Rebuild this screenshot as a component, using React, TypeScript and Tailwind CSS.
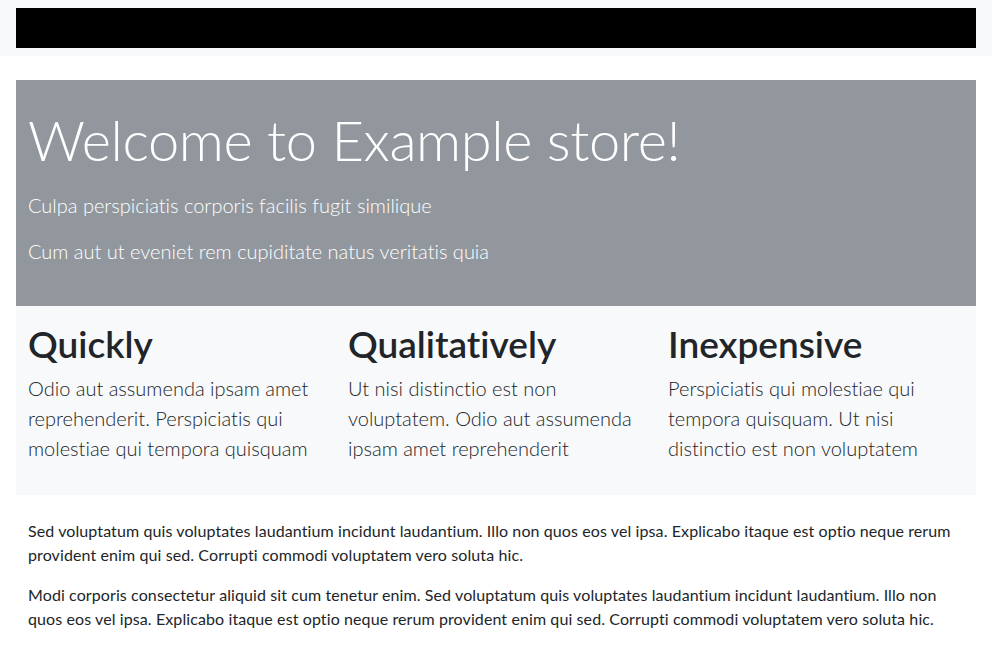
import React from "react";

const features = [
  {
    title: "Quickly",
    text: "Odio aut assumenda ipsam amet reprehenderit. Perspiciatis qui molestiae qui tempora quisquam",
  },
  {
    title: "Qualitatively",
    text: "Ut nisi distinctio est non voluptatem. Odio aut assumenda ipsam amet reprehenderit",
  },
  {
    title: "Inexpensive",
    text: "Perspiciatis qui molestiae qui tempora quisquam. Ut nisi distinctio est non voluptatem",
  },
];

export default function App() {
  return (
    <div className="min-h-screen bg-white font-['Lato',sans-serif] text-[#212529] [font-variant-ligatures:none]">
      {/* Navbar */}
      <nav className="bg-[#f8f9fa] px-4 py-2">
        <div className="h-10 w-full bg-black"></div>
      </nav>

      <main className="mt-6 px-4">
        {/* Jumbotron */}
        <div className="bg-[#91979d] px-3 pt-[26px] pb-6 text-white">
          <h1 className="mb-[17px] text-[56px] font-light leading-[1.2] tracking-[-0.4px]">
            Welcome to Example store!
          </h1>
          <p className="mb-4 text-[20px] font-light leading-[30px]">
            Culpa perspiciatis corporis facilis fugit similique
          </p>
          <p className="mb-4 text-[20px] font-light leading-[30px]">
            Cum aut ut eveniet rem cupiditate natus veritatis quia
          </p>
        </div>

        {/* Features */}
        <div className="grid grid-cols-3 bg-[#f8f9fa] pt-4 pb-4">
          {features.map((f) => (
            <div key={f.title} className="px-3">
              <h2 className="mb-1.5 text-[37px] font-semibold leading-[1.2]">
                {f.title}
              </h2>
              <p className="mb-4 text-[20px] font-light leading-[30px]">
                {f.text}
              </p>
            </div>
          ))}
        </div>

        {/* Text */}
        <div className="px-3 pt-6 text-base leading-6 tracking-[0.1px]">
          <p className="mb-4">
            Sed voluptatum quis voluptates laudantium incidunt laudantium. Illo
            non quos eos vel ipsa. Explicabo itaque est optio neque rerum
            provident enim qui sed. Corrupti commodi voluptatem vero soluta hic.
          </p>
          <p className="mb-4">
            Modi corporis consectetur aliquid sit cum tenetur enim. Sed
            voluptatum quis voluptates laudantium incidunt laudantium. Illo non
            quos eos vel ipsa. Explicabo itaque est optio neque rerum provident
            enim qui sed. Corrupti commodi voluptatem vero soluta hic.
          </p>
        </div>
      </main>
    </div>
  );
}
